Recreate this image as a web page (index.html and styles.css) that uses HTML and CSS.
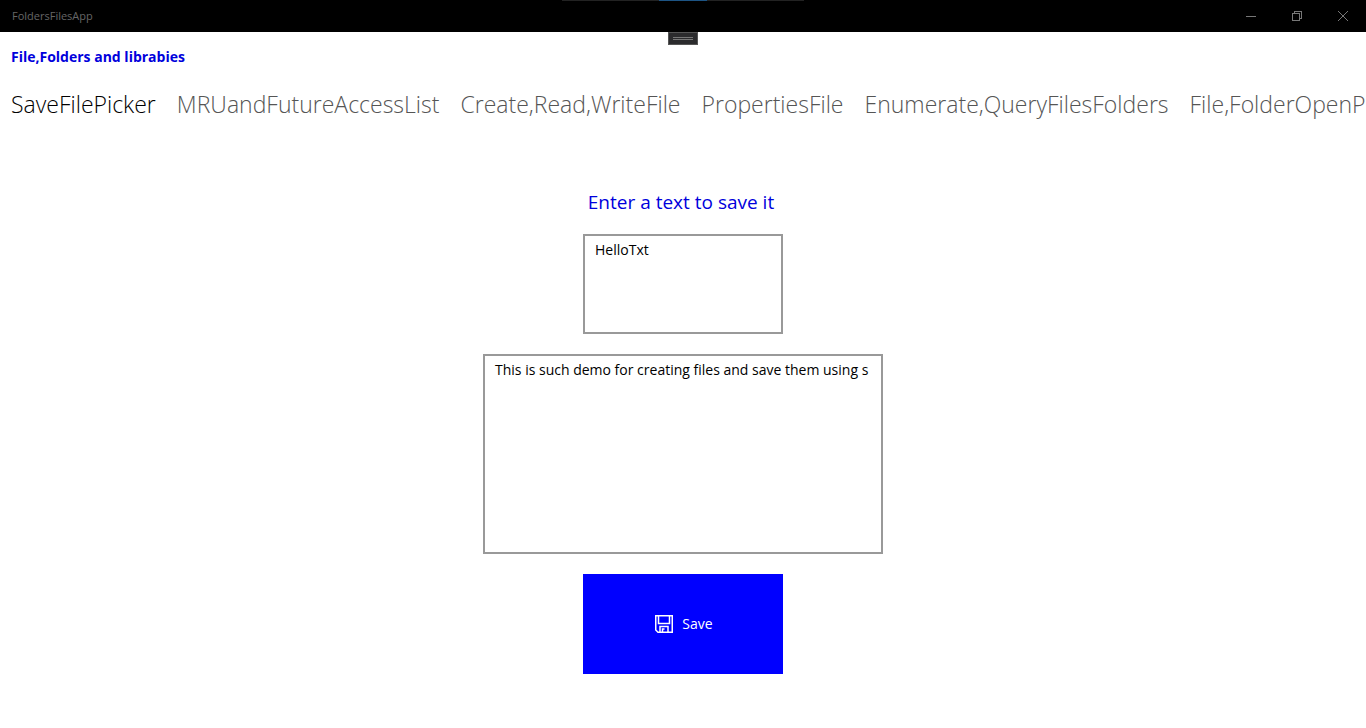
FILE: index.html
```html
<!DOCTYPE html>
<html lang="en">
<head>
<meta charset="utf-8">
<meta name="viewport" content="width=device-width, initial-scale=1">
<title>FoldersFilesApp</title>
<link rel="stylesheet" href="styles.css">
</head>
<body>
<header class="titlebar">
  <span class="app-name">FoldersFilesApp</span>
  <div class="top-edge"></div>
  <div class="window-controls">
    <button type="button" aria-label="Minimize"><svg width="10" height="10" viewBox="0 0 10 10" shape-rendering="crispEdges"><path d="M0 5.5H10"/></svg></button>
    <button type="button" aria-label="Restore"><svg width="10" height="10" viewBox="0 0 10 10" shape-rendering="crispEdges"><path d="M.5 2.5H7.5V9.5H.5ZM2.5 2.5V.5H9.5V7.5H7.5"/></svg></button>
    <button type="button" aria-label="Close"><svg width="10" height="10" viewBox="0 0 10 10"><path d="M0 0L10 10M10 0L0 10"/></svg></button>
  </div>
  <button type="button" class="debug-handle" aria-label="Expand toolbar"><span></span><span></span></button>
</header>
<main class="page">
  <h1 class="page-title">File,Folders and librabies</h1>
  <nav class="pivot">
    <a href="#save" class="pivot-item active" aria-current="page">SaveFilePicker</a>
    <a href="#mru" class="pivot-item">MRUandFutureAccessList</a>
    <a href="#create" class="pivot-item">Create,Read,WriteFile</a>
    <a href="#properties" class="pivot-item">PropertiesFile</a>
    <a href="#enumerate" class="pivot-item">Enumerate,QueryFilesFolders</a>
    <a href="#open" class="pivot-item">File,FolderOpenP</a>
  </nav>
  <form class="save-form" id="save">
    <label class="prompt" for="file-name">Enter a text to save it</label>
    <textarea class="field name-field" id="file-name" wrap="off" spellcheck="false">HelloTxt</textarea>
    <textarea class="field content-field" aria-label="File content" wrap="off" spellcheck="false">This is such demo for creating files and save them using s</textarea>
    <button type="button" class="save-button">
      <svg width="18" height="18" viewBox="0 0 18 18" aria-hidden="true"><path d="M.75 .75H17.25V17.25H3L.75 15ZM3.5 1V8.5H14.5V1M5 17V11.5H13V17M7.5 17V14H9.5"/></svg>
      <span>Save</span>
    </button>
  </form>
</main>
</body>
</html>
```
FILE: styles.css
```css
* {
  box-sizing: border-box;
}

body {
  margin: 0;
  min-height: 100vh;
  overflow-x: hidden;
  background: #fff;
  color: #000;
  font-family: "Open Sans", "Noto Sans", sans-serif;
}

button {
  padding: 0;
  border: 0;
  font: inherit;
}

.titlebar {
  position: relative;
  display: flex;
  align-items: center;
  justify-content: space-between;
  height: 32px;
  padding-left: 12px;
  background: #000;
}

.app-name {
  color: #666;
  font-size: 11px;
  line-height: 16px;
}

.window-controls {
  display: flex;
}

.window-controls button {
  display: flex;
  align-items: center;
  justify-content: center;
  width: 46px;
  height: 32px;
  background: transparent;
}

.window-controls svg {
  fill: none;
  stroke: #777;
}

.top-edge {
  position: absolute;
  top: 0;
  left: 50%;
  width: 242px;
  height: 1px;
  transform: translateX(-50%);
  background: linear-gradient(90deg, #222 0 40%, #1d5484 40% 60%, #222 60%);
}

.debug-handle {
  position: absolute;
  top: 100%;
  left: 50%;
  display: flex;
  flex-direction: column;
  align-items: center;
  justify-content: center;
  gap: 1px;
  width: 30px;
  height: 13px;
  transform: translateX(-50%);
  border: 1px solid #555;
  background: #2b2b2d;
}

.debug-handle span {
  width: 20px;
  height: 1px;
  background: #777;
}

.page {
  padding-top: 13px;
}

.page-title {
  margin: 0;
  padding-left: 11px;
  color: #0000dc;
  font-size: 14px;
  font-weight: 700;
  line-height: 24px;
}

.pivot {
  display: flex;
  gap: 21px;
  padding: 19px 0 0 11px;
  overflow: hidden;
  white-space: nowrap;
}

.pivot-item {
  color: #555;
  font-size: 23px;
  font-weight: 300;
  line-height: 32px;
  text-decoration: none;
}

.pivot-item.active {
  color: #000;
}

.save-form {
  display: flex;
  flex-direction: column;
  align-items: center;
  gap: 20px;
  padding: 70px 12px 12px;
}

.prompt {
  padding-right: 4px;
  color: #0000dc;
  font-size: 19px;
  line-height: 24px;
}

.field {
  display: block;
  max-width: 100%;
  padding: 4px 6px 4px 10px;
  border: 2px solid #999;
  border-radius: 0;
  outline: 0;
  resize: none;
  overflow: hidden;
  background: #fff;
  color: #000;
  font-family: inherit;
  font-size: 14px;
  line-height: 20px;
}

.name-field {
  width: 200px;
  height: 100px;
}

.content-field {
  width: 400px;
  height: 200px;
}

.save-button {
  display: flex;
  align-items: center;
  justify-content: center;
  gap: 9px;
  width: 200px;
  height: 100px;
  padding-left: 2px;
  background: #00f;
  color: #fff;
  font-size: 14px;
  line-height: 20px;
}

.save-button svg {
  fill: none;
  stroke: #fff;
  stroke-width: 1.5;
}
```
